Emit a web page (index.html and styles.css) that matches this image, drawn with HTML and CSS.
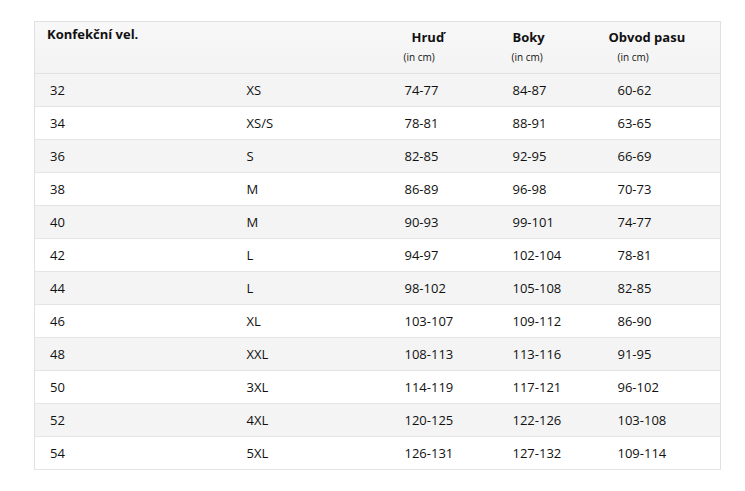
FILE: index.html
```html
<!DOCTYPE html>
<html lang="cs">
<head>
<meta charset="utf-8">
<link rel="stylesheet" href="styles.css">
</head>
<body>
<div class="page">
<table class="sizes">
  <colgroup>
    <col class="c1"><col class="c2"><col class="c3"><col class="c4"><col class="c5">
  </colgroup>
  <thead>
    <tr>
      <th class="h-first">Konfekční vel.</th>
      <th></th>
      <th><span class="t t3">Hruď</span><span class="u">(in cm)</span></th>
      <th><span class="t">Boky</span><span class="u">(in cm)</span></th>
      <th><span class="t t5">Obvod pasu</span><span class="u u5">(in cm)</span></th>
    </tr>
  </thead>
  <tbody>
    <tr><td>32</td><td>XS</td><td>74-77</td><td>84-87</td><td>60-62</td></tr>
    <tr><td>34</td><td>XS/S</td><td>78-81</td><td>88-91</td><td>63-65</td></tr>
    <tr><td>36</td><td>S</td><td>82-85</td><td>92-95</td><td>66-69</td></tr>
    <tr><td>38</td><td>M</td><td>86-89</td><td>96-98</td><td>70-73</td></tr>
    <tr><td>40</td><td>M</td><td>90-93</td><td>99-101</td><td>74-77</td></tr>
    <tr><td>42</td><td>L</td><td>94-97</td><td>102-104</td><td>78-81</td></tr>
    <tr><td>44</td><td>L</td><td>98-102</td><td>105-108</td><td>82-85</td></tr>
    <tr><td>46</td><td>XL</td><td>103-107</td><td>109-112</td><td>86-90</td></tr>
    <tr><td>48</td><td>XXL</td><td>108-113</td><td>113-116</td><td>91-95</td></tr>
    <tr><td>50</td><td>3XL</td><td>114-119</td><td>117-121</td><td>96-102</td></tr>
    <tr><td>52</td><td>4XL</td><td>120-125</td><td>122-126</td><td>103-108</td></tr>
    <tr><td>54</td><td>5XL</td><td>126-131</td><td>127-132</td><td>109-114</td></tr>
  </tbody>
</table>
</div>
</body>
</html>
```

FILE: styles.css
```css
html, body {
  margin: 0;
  padding: 0;
  background: #ffffff;
}

.page {
  padding: 21px 0 0 34px;
}

.sizes {
  border-collapse: collapse;
  table-layout: fixed;
  width: 686px;
  font-family: "Open Sans", "Noto Sans", sans-serif;
  font-size: 13px;
  color: #111111;
  border: 1px solid #e0e0e0;
}

.c1 { width: 198px; }
.c2 { width: 158px; }
.c3 { width: 108px; }
.c4 { width: 105px; }
.c5 { width: 117px; }

.sizes thead tr {
  height: 52px;
  background: linear-gradient(#f8f8f8, #f3f3f3);
  border-bottom: 1px solid #e2e2e2;
}

.sizes th {
  text-align: left;
  vertical-align: top;
  padding: 0 0 0 14px;
  font-weight: 700;
}

.sizes th.h-first {
  padding-left: 12px;
  padding-top: 3px;
  line-height: 18px;
}

.t {
  display: block;
  padding-top: 6px;
  line-height: 18px;
}

.t3 { padding-left: 7px; }
.t5 { margin-left: -9px; }

.u {
  display: block;
  font-weight: 400;
  font-size: 10px;
  line-height: 14px;
  padding-top: 4px;
  margin-left: -1px;
}

.u5 { margin-left: 0; }

.sizes tbody tr {
  height: 33px;
  border-bottom: 1px solid #e4e4e4;
}

.sizes tbody tr:nth-child(odd) {
  background: #f4f4f4;
}

.sizes td {
  padding: 0 0 0 14px;
  vertical-align: middle;
  line-height: 18px;
  white-space: nowrap;
}

.sizes td:first-child {
  padding-left: 15px;
}
```
